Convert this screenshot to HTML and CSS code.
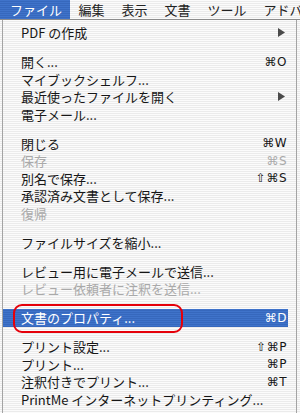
FILE: index.html
```html
<!DOCTYPE html>
<html lang="ja">
<head>
  <meta charset="UTF-8" />
  <title>ファイル メニュー</title>
  <link rel="stylesheet" href="styles.css">
</head>
<body>

<div class="menubar">
  <span class="top active">ファイル</span>
  <span class="top">編集</span>
  <span class="top">表示</span>
  <span class="top">文書</span>
  <span class="top">ツール</span>
  <span class="top">アドバ</span>
</div>

<div class="menu">
  <div class="item"><span>PDF の作成</span><svg class="arrow" width="7" height="9" viewBox="0 0 7 9"><path d="M0 0 L7 4.5 L0 9 Z" fill="#4a4a4a"/></svg></div>
  <div class="sep"></div>
  <div class="item"><span>開く...</span><span class="key">⌘O</span></div>
  <div class="item"><span>マイブックシェルフ...</span></div>
  <div class="item"><span>最近使ったファイルを開く</span><svg class="arrow" width="7" height="9" viewBox="0 0 7 9"><path d="M0 0 L7 4.5 L0 9 Z" fill="#4a4a4a"/></svg></div>
  <div class="item"><span>電子メール...</span></div>
  <div class="sep"></div>
  <div class="item"><span>閉じる</span><span class="key">⌘W</span></div>
  <div class="item off"><span>保存</span><span class="key">⌘S</span></div>
  <div class="item"><span>別名で保存...</span><span class="key">⇧⌘S</span></div>
  <div class="item"><span>承認済み文書として保存...</span></div>
  <div class="item off"><span>復帰</span></div>
  <div class="sep"></div>
  <div class="item"><span>ファイルサイズを縮小...</span></div>
  <div class="sep"></div>
  <div class="item"><span>レビュー用に電子メールで送信...</span></div>
  <div class="item off"><span>レビュー依頼者に注釈を送信...</span></div>
  <div class="sep"></div>
  <div class="item selected"><span>文書のプロパティ...</span><span class="key">⌘D</span><div class="ring"></div></div>
  <div class="sep"></div>
  <div class="item"><span>プリント設定...</span><span class="key">⇧⌘P</span></div>
  <div class="item"><span>プリント...</span><span class="key">⌘P</span></div>
  <div class="item"><span>注釈付きでプリント...</span><span class="key">⌘T</span></div>
  <div class="item"><span>PrintMe インターネットプリンティング...</span></div>
</div>

</body>
</html>
```

FILE: styles.css
```css
body {
  margin: 0;
  width: 300px;
  height: 413px;
  overflow: hidden;
  font-family: "Noto Sans CJK JP", "DejaVu Sans", sans-serif;
  font-size: 13px;
  color: #161616;
  background: repeating-linear-gradient(#fbfbfb 0 1px, #ebebeb 1px 2px);
}

.menubar {
  display: flex;
  height: 19px;
  border-bottom: 1px solid #8c8c8c;
  white-space: nowrap;
  overflow: hidden;
}

.top {
  padding: 0 8.5px;
  line-height: 19px;
  color: #222;
}

.top.active {
  padding: 0 8px 0 10px;
  color: white;
  background: repeating-linear-gradient(#3f73ca 0 1px, #3668bd 1px 2px);
}

.menu {
  margin-left: 2px;
  width: 293px;
  height: 390px;
  padding-top: 4px;
  border-left: 1px solid #a4a4a4;
  border-right: 1px solid #a4a4a4;
  border-bottom: 1px solid #8c8c8c;
}

.item {
  position: relative;
  display: flex;
  justify-content: space-between;
  align-items: center;
  height: 17.5px;
  margin-right: 8px;
  padding: 0 1px 0 18px;
  white-space: nowrap;
}

.sep {
  height: 11.5px;
}

.off {
  color: #a9a9a9;
}

.key {
  font-family: "DejaVu Sans", sans-serif;
  font-size: 12px;
  letter-spacing: 0.5px;
}

.arrow {
  margin-right: 2px;
}

.selected {
  color: white;
  background: repeating-linear-gradient(#3f73ca 0 1px, #3668bd 1px 2px);
}

.ring {
  position: absolute;
  left: 10px;
  top: -5px;
  width: 170px;
  height: 29px;
  box-sizing: border-box;
  border: 2px solid #e5000a;
  border-radius: 9px;
}
```
